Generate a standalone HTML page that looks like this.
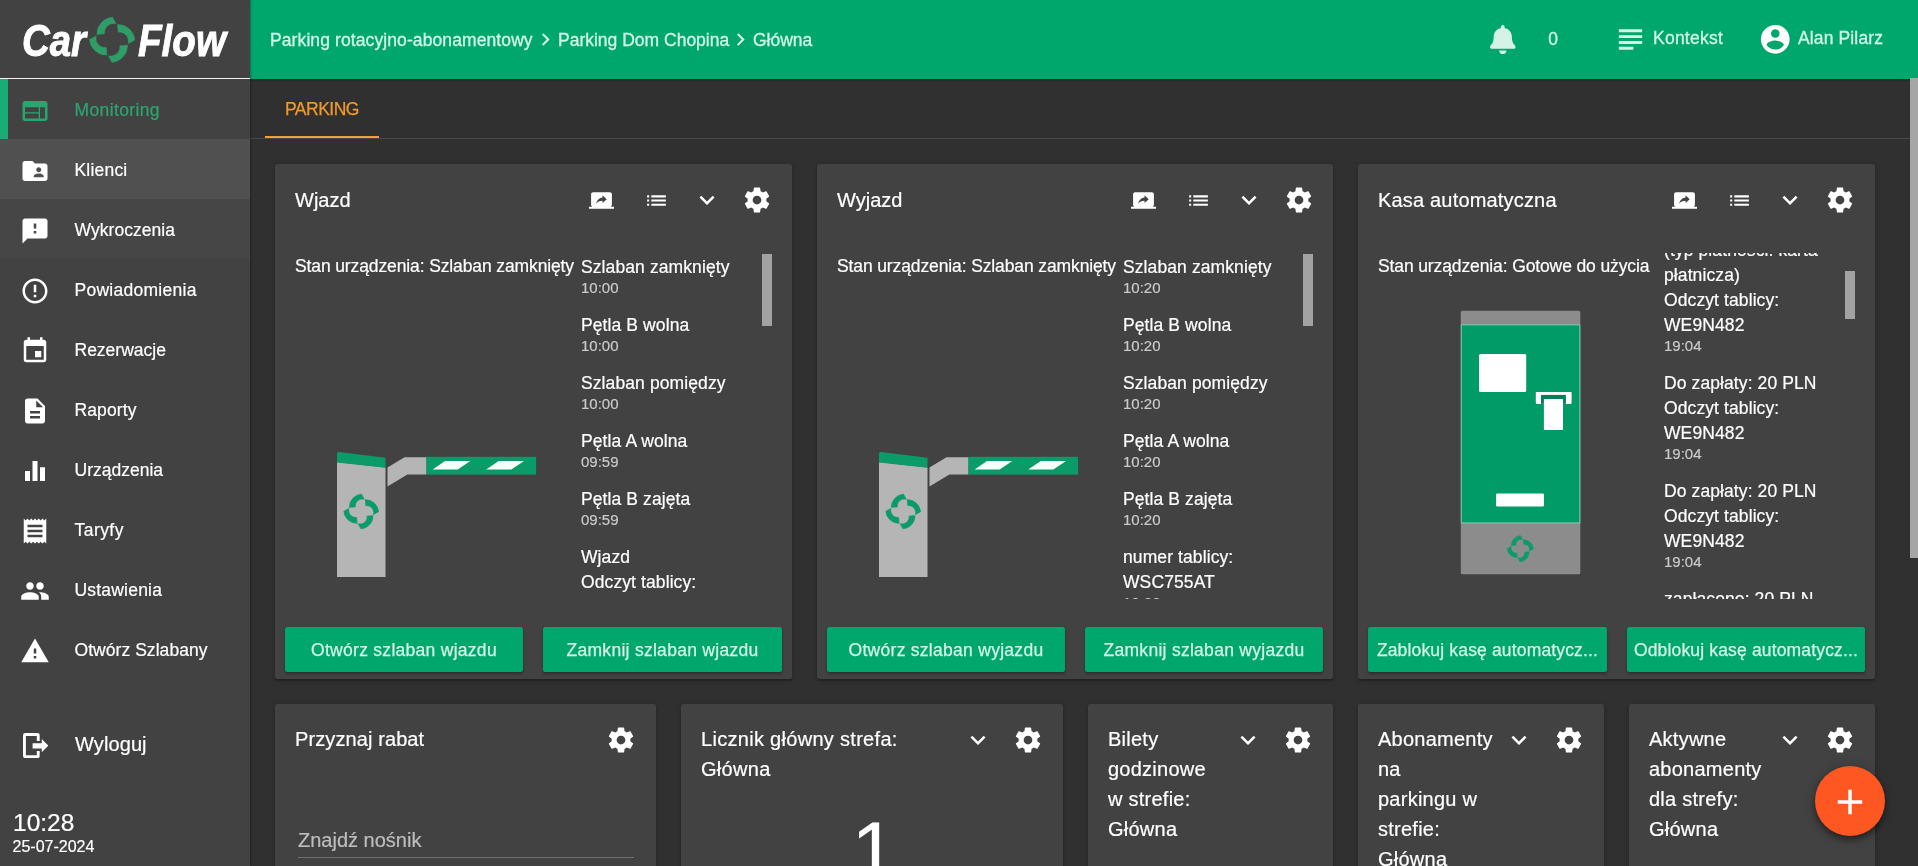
<!DOCTYPE html>
<html lang="pl">
<head>
<meta charset="utf-8">
<title>CarFlow - Monitoring</title>
<style>
*{box-sizing:border-box;margin:0;padding:0}
html,body{width:1918px;height:866px;overflow:hidden;background:#303030}
body{font-family:"Liberation Sans",sans-serif;color:#fff;position:relative;font-size:17.5px;-webkit-text-stroke:.2px}
svg{display:block;position:absolute}
.abs{position:absolute;white-space:nowrap}
#side,#top,#main,.card{will-change:transform}
/* sidebar */
#side{position:absolute;left:0;top:0;width:250px;height:866px;background:#424242;box-shadow:1px 0 2px rgba(0,0,0,.3);z-index:3}
#side .line{position:absolute;left:0;top:78px;width:250px;height:1px;background:#f2f2f2}
.nav{position:absolute;left:0;width:250px;height:60px}
.nav .t{position:absolute;left:74.5px;top:0;line-height:62px;letter-spacing:.1px;font-size:17.5px;white-space:nowrap}
.nav svg{left:20.2px;top:17px;width:30px;height:30px;fill:#fff}
.nav.act{background:#424242}
.nav.act .bar{position:absolute;left:0;top:0;width:8px;height:60px;background:#1aac76}
.nav.act .t{color:#2ea571}
.nav.act svg{fill:#28a670}
.nav.hov{background:#505050}
.nav.hov2{background:#464646}
/* top bar */
#top{position:absolute;left:250px;top:0;width:1668px;height:78.75px;background:#00A76D;box-shadow:0 1px 2px rgba(0,0,0,.35)}
#top .t{position:absolute;white-space:nowrap;color:#d2f7e8;font-size:17.5px;line-height:20px;-webkit-text-stroke:.3px #d2f7e8}
/* main */
#tabline{position:absolute;left:250px;top:138px;width:1660px;height:1px;background:#484848}
#tabul{position:absolute;left:265px;top:136px;width:114px;height:2.3px;background:#eea03a}
.card{position:absolute;background:#424242;border-radius:2.5px;box-shadow:0 2px 2px rgba(0,0,0,.22),0 1px 5px rgba(0,0,0,.18);overflow:hidden}
.card .h{position:absolute;left:20px;top:20.8px;font-size:20px;line-height:30px;white-space:nowrap}
.card .h.r2{top:20px;letter-spacing:.25px}
.ic{fill:#fff}
.btn{position:absolute;height:45px;letter-spacing:.16px;padding-top:.7px;-webkit-text-stroke:.25px #d4f3e6;border-radius:2.5px;background:#00A76D;color:#d4f3e6;font-size:17.5px;line-height:45px;text-align:center;white-space:nowrap;overflow:hidden;box-shadow:0 2px 3px rgba(0,0,0,.3)}
.stan{position:absolute;left:20px;top:90.7px;font-size:17.5px;line-height:22px;letter-spacing:-.12px;white-space:nowrap}
.log{position:absolute;top:89px;height:346px;overflow:hidden}
.log .in{position:absolute;left:0;width:100%}
.log p{font-size:17.5px;line-height:25px;white-space:nowrap;letter-spacing:.1px;position:relative;top:.8px}
.log p.tm{font-size:15px;line-height:21px;color:#cacaca;margin-bottom:12px;position:relative;top:-2.3px;letter-spacing:0}
.sb{position:absolute;width:10px;background:#a2a2a2}
</style>
</head>
<body>
<svg width="0" height="0" style="position:absolute">
  <defs>
    <symbol id="i-gear" viewBox="0 0 24 24"><path d="M19.43 12.98c.04-.32.07-.64.07-.98s-.03-.66-.07-.98l2.11-1.65c.19-.15.24-.42.12-.64l-2-3.46c-.12-.22-.39-.3-.61-.22l-2.49 1c-.52-.4-1.08-.73-1.69-.98l-.38-2.65C14.46 2.18 14.25 2 14 2h-4c-.25 0-.46.18-.49.42l-.38 2.65c-.61.25-1.17.59-1.69.98l-2.49-1c-.23-.09-.49 0-.61.22l-2 3.46c-.13.22-.07.49.12.64l2.11 1.65c-.04.32-.07.65-.07.98s.03.66.07.98l-2.11 1.65c-.19.15-.24.42-.12.64l2 3.46c.12.22.39.3.61.22l2.49-1c.52.4 1.08.73 1.69.98l.38 2.65c.03.24.24.42.49.42h4c.25 0 .46-.18.49-.42l.38-2.65c.61-.25 1.17-.59 1.69-.98l2.49 1c.23.09.49 0 .61-.22l2-3.46c.12-.22.07-.49-.12-.64l-2.11-1.65zM12 15.5c-1.93 0-3.5-1.57-3.5-3.5s1.57-3.5 3.5-3.5 3.5 1.57 3.5 3.5-1.57 3.5-3.5 3.5z"/></symbol>
    <symbol id="i-share" viewBox="0 0 24 24"><path d="M20 18c1.1 0 1.99-.9 1.99-2L22 6c0-1.11-.9-2-2-2H4c-1.11 0-2 .89-2 2v10c0 1.1.89 2 2 2H0v2h24v-2h-4zm-7-3.53v-2.19c-2.78 0-4.61.85-6 2.72.56-2.67 2.11-5.33 6-5.87V7l4 3.73-4 3.74z"/></symbol>
    <symbol id="i-list" viewBox="0 0 24 24"><path d="M3 13h2v-2H3v2zm0 4h2v-2H3v2zm0-8h2V7H3v2zm4 4h14v-2H7v2zm0 4h14v-2H7v2zM7 7v2h14V7H7z"/></symbol>
    <symbol id="i-chev" viewBox="0 0 24 24"><path d="M7.41 8.59L12 13.17l4.59-4.58L18 10l-6 6-6-6 1.41-1.41z"/></symbol>
  </defs>
</svg>

<!-- ============ SIDEBAR ============ -->
<div id="side">
  <svg id="logo" style="left:0;top:0" width="250" height="78" viewBox="0 0 250 78">
    <defs>
      <g id="cf">
        <path d="M-15.3-5.4A17 17 0 0 1 .3-22.5L3.8-16A9.2 9.2 0 0 0-7.7-6Z"/>
        <path d="M-15.3-5.4A17 17 0 0 1 .3-22.5L3.8-16A9.2 9.2 0 0 0-7.7-6Z" transform="rotate(90)"/>
        <path d="M-15.3-5.4A17 17 0 0 1 .3-22.5L3.8-16A9.2 9.2 0 0 0-7.7-6Z" transform="rotate(180)"/>
        <path d="M-15.3-5.4A17 17 0 0 1 .3-22.5L3.8-16A9.2 9.2 0 0 0-7.7-6Z" transform="rotate(270)"/>
      </g>
    </defs>
    <text x="22" y="55.5" font-family="Liberation Sans, sans-serif" font-weight="bold" font-style="italic" font-size="44" fill="#fff" stroke="#fff" stroke-width=".9" textLength="64" lengthAdjust="spacingAndGlyphs">Car</text>
    <use href="#cf" transform="translate(112.2 39.8)" fill="#2e9e66" stroke="#2e9e66" stroke-width=".6"/>
    <text x="138" y="55.5" font-family="Liberation Sans, sans-serif" font-weight="bold" font-style="italic" font-size="44" fill="#fff" stroke="#fff" stroke-width=".9" textLength="88" lengthAdjust="spacingAndGlyphs">Flow</text>
  </svg>
  <div class="line"></div>
  <div id="navs">
    <div class="nav act" style="top:79px"><div class="bar"></div><svg viewBox="0 0 24 24"><path d="M20 4H4c-1.1 0-1.99.9-1.99 2L2 18c0 1.1.9 2 2 2h16c1.1 0 2-.9 2-2V6c0-1.1-.9-2-2-2zm-5 14H4v-4h11v4zm0-5H4V9h11v4zm5 5h-4V9h4v9z"/></svg><span class="t" style="letter-spacing:0.37px">Monitoring</span></div>
    <div class="nav hov" style="top:139px"><svg viewBox="0 0 24 24"><path d="M20 6h-8l-2-2H4c-1.1 0-1.99.9-1.99 2L2 18c0 1.1.9 2 2 2h16c1.1 0 2-.9 2-2V8c0-1.1-.9-2-2-2zm-5 3c1.1 0 2 .9 2 2s-.9 2-2 2-2-.9-2-2 .9-2 2-2zm4 8h-8v-1c0-1.33 2.67-2 4-2s4 .67 4 2v1z"/></svg><span class="t" style="letter-spacing:0.2px">Klienci</span></div>
    <div class="nav hov2" style="top:199px"><svg viewBox="0 0 24 24"><path d="M20 2H4c-1.1 0-1.99.9-1.99 2L2 22l4-4h14c1.1 0 2-.9 2-2V4c0-1.1-.9-2-2-2zm-7 12h-2v-2h2v2zm0-4h-2V6h2v4z"/></svg><span class="t" style="letter-spacing:0.05px">Wykroczenia</span></div>
    <div class="nav " style="top:259px"><svg viewBox="0 0 24 24"><path d="M11 15h2v2h-2zm0-8h2v6h-2zm.99-5C6.47 2 2 6.48 2 12s4.47 10 9.99 10C17.52 22 22 17.52 22 12S17.52 2 11.99 2zM12 20c-4.42 0-8-3.58-8-8s3.58-8 8-8 8 3.58 8 8-3.58 8-8 8z"/></svg><span class="t" style="letter-spacing:0.27px">Powiadomienia</span></div>
    <div class="nav " style="top:319px"><svg viewBox="0 0 24 24"><path d="M17 12h-5v5h5v-5zM16 1v2H8V1H6v2H5c-1.11 0-1.99.9-1.99 2L3 19c0 1.1.89 2 2 2h14c1.1 0 2-.9 2-2V5c0-1.1-.9-2-2-2h-1V1h-2zm3 18H5V8h14v11z"/></svg><span class="t" style="letter-spacing:0px">Rezerwacje</span></div>
    <div class="nav " style="top:379px"><svg viewBox="0 0 24 24"><path d="M14 2H6c-1.1 0-1.99.9-1.99 2L4 20c0 1.1.89 2 1.99 2H18c1.1 0 2-.9 2-2V8l-6-6zm2 16H8v-2h8v2zm0-4H8v-2h8v2zm-3-5V3.5L18.5 9H13z"/></svg><span class="t" style="letter-spacing:0.1px">Raporty</span></div>
    <div class="nav " style="top:439px"><svg viewBox="0 0 24 24"><path d="M10 20h4V4h-4v16zm-6 0h4v-8H4v8zM16 9v11h4V9h-4z"/></svg><span class="t" style="letter-spacing:0px">Urządzenia</span></div>
    <div class="nav " style="top:499px"><svg viewBox="0 0 24 24"><path d="M18 17H6v-2h12v2zm0-4H6v-2h12v2zm0-4H6V7h12v2zM3 22l1.5-1.5L6 22l1.5-1.5L9 22l1.5-1.5L12 22l1.5-1.5L15 22l1.5-1.5L18 22l1.5-1.5L21 22V2l-1.5 1.5L18 2l-1.5 1.5L15 2l-1.5 1.5L12 2l-1.5 1.5L9 2 7.5 3.5 6 2 4.5 3.5 3 2v20z"/></svg><span class="t" style="letter-spacing:0.45px">Taryfy</span></div>
    <div class="nav " style="top:559px"><svg viewBox="0 0 24 24"><path d="M16 11c1.66 0 2.99-1.34 2.99-3S17.66 5 16 5c-1.66 0-3 1.34-3 3s1.34 3 3 3zm-8 0c1.66 0 2.99-1.34 2.99-3S9.66 5 8 5C6.34 5 5 6.34 5 8s1.34 3 3 3zm0 2c-2.33 0-7 1.17-7 3.5V19h14v-2.5c0-2.33-4.67-3.5-7-3.5zm8 0c-.29 0-.62.02-.97.05 1.16.84 1.97 1.97 1.97 3.45V19h6v-2.5c0-2.33-4.67-3.5-7-3.5z"/></svg><span class="t" style="letter-spacing:0.2px">Ustawienia</span></div>
    <div class="nav " style="top:619px"><svg viewBox="0 0 24 24"><path d="M1 21h22L12 2 1 21zm12-3h-2v-2h2v2zm0-4h-2v-4h2v4z"/></svg><span class="t" style="letter-spacing:0.05px">Otwórz Szlabany</span></div>
    <div class="nav" style="top:713px"><svg viewBox="0 0 25.4 25.2" style="left:22.5px;top:20.3px;width:25.4px;height:25.2px"><path d="M2.5 0H14.2a2.5 2.5 0 0 1 2.5 2.5V7.9H13.8V2.9H2.9V22.3H13.8V17.9H16.7V22.7a2.5 2.5 0 0 1-2.5 2.5H2.5a2.5 2.5 0 0 1-2.5-2.5V2.5A2.5 2.5 0 0 1 2.5 0ZM18.75 6L25.4 12.7L18.75 19.2V15.4H9.6V10.2H18.75Z"/></svg><span class="t" style="font-size:20px;left:75px">Wyloguj</span></div>
    <div class="abs" style="left:13px;top:808.7px;font-size:24.5px;line-height:28px">10:28</div>
    <div class="abs" style="left:12.5px;top:838.4px;font-size:16px;line-height:18px">25-07-2024</div>
  </div>
</div>

<!-- ============ TOP BAR ============ -->
<div id="top">
  <span class="t" style="left:20px;top:30px;letter-spacing:.1px">Parking rotacyjno-abonamentowy</span>
  <svg style="left:283px;top:27px;width:25px;height:25px;fill:#d4f3e6" viewBox="0 0 24 24"><path d="M10 6L8.59 7.41 13.17 12l-4.58 4.59L10 18l6-6z"/></svg>
  <span class="t" style="left:308px;top:30px">Parking Dom Chopina</span>
  <svg style="left:478px;top:27px;width:25px;height:25px;fill:#d4f3e6" viewBox="0 0 24 24"><path d="M10 6L8.59 7.41 13.17 12l-4.58 4.59L10 18l6-6z"/></svg>
  <span class="t" style="left:503px;top:30px">Główna</span>
  <svg style="left:1240px;top:24.8px;width:25.6px;height:29.2px;fill:#d4f3e6" viewBox="0 0 448 512"><path d="M224 512c35.32 0 63.97-28.65 63.97-64H160.03c0 35.35 28.65 64 63.97 64zm215.39-149.71c-19.32-20.76-55.47-51.99-55.47-154.29 0-77.7-54.48-139.9-127.94-155.16V32c0-17.67-14.32-32-31.98-32s-31.98 14.33-31.98 32v20.84C118.56 68.1 64.08 130.3 64.08 208c0 102.3-36.15 133.53-55.47 154.29-6 6.45-8.66 14.16-8.61 21.71.11 16.4 12.98 32 32.1 32h383.8c19.12 0 32-15.6 32.1-32 .05-7.55-2.61-15.27-8.61-21.71z"/></svg>
  <span class="t" style="left:1298.2px;top:29px">0</span>
  <svg style="left:1363px;top:22.1px;width:35px;height:35px;fill:#d4f3e6" viewBox="0 0 24 24"><path d="M14 17H4v2h10v-2zm6-8H4v2h16V9zM4 15h16v-2H4v2zM4 5v2h16V5H4z"/></svg>
  <span class="t" style="left:1403px;top:28px;letter-spacing:.24px">Kontekst</span>
  <svg style="left:1508.1px;top:22.2px;width:34.5px;height:34.5px;fill:#fff" viewBox="0 0 24 24"><path d="M12 2C6.48 2 2 6.48 2 12s4.48 10 10 10 10-4.48 10-10S17.52 2 12 2zm0 3c1.66 0 3 1.34 3 3s-1.34 3-3 3-3-1.34-3-3 1.34-3 3-3zm0 14.2c-2.5 0-4.71-1.28-6-3.22.03-1.99 4-3.08 6-3.08 1.99 0 5.97 1.09 6 3.08-1.29 1.94-3.5 3.22-6 3.22z"/></svg>
  <span class="t" style="left:1548px;top:28px;letter-spacing:.13px">Alan Pilarz</span>
</div>

<!-- ============ MAIN ============ -->
<div id="main">
  <div class="abs" style="left:285px;top:99.2px;font-size:17.5px;line-height:20px;color:#f09a2e;letter-spacing:-.5px;-webkit-text-stroke:.25px #f09a2e">PARKING</div>
  <div id="tabline"></div><div id="tabul"></div>

  <!-- Wjazd -->
  <div class="card" style="left:275px;top:164px;width:517px;height:515px">
    <div class="h">Wjazd</div>
    <svg class="ic" style="left:313.8px;top:24px" width="25" height="25"><use href="#i-share"/></svg><svg class="ic" style="left:369.2px;top:23.9px" width="25" height="25"><use href="#i-list"/></svg><svg class="ic" style="left:417px;top:20.6px" width="30" height="30"><use href="#i-chev"/></svg><svg class="ic" style="left:467px;top:21px" width="30" height="30"><use href="#i-gear"/></svg>
    <div class="stan">Stan urządzenia: Szlaban zamknięty</div>
    <svg style="left:55px;top:280px" width="220" height="140" viewBox="330 444 220 140">
      <polygon points="337,462 385.5,467.5 385.5,577 337,577" fill="#b5b5b5"/>
      <path d="M337 453.5Q337 451.6 339 452L385.5 457.7V467.7L337 462.5Z" fill="#0b9b69"/>
      <polygon points="387.5,467.4 404.5,457.2 426.5,457.2 426.5,474.4 407.4,474.4 387.5,486.4" fill="#b5b5b5"/>
      <rect x="426.5" y="456.8" width="109.6" height="17.8" fill="#0b9b69"/>
      <polygon points="432.6,469.4 457.7,469.4 470.3,461.1 445,461.1" fill="#f4fffb"/>
      <polygon points="486.2,469.4 511.3,469.4 524,461.1 498.7,461.1" fill="#f4fffb"/>
      <use href="#cf" transform="translate(361.2 511.5) scale(.77)" fill="#0b9b69" stroke="#0b9b69" stroke-width="1"/>
    </svg>
    <div class="log" style="left:306px;width:180px"><div class="in" style="top:1px"><p>Szlaban zamknięty</p><p class="tm">10:00</p><p>Pętla B wolna</p><p class="tm">10:00</p><p>Szlaban pomiędzy</p><p class="tm">10:00</p><p>Pętla A wolna</p><p class="tm">09:59</p><p>Pętla B zajęta</p><p class="tm">09:59</p><p>Wjazd</p><p>Odczyt tablicy:</p><p>WSC755AT</p><p class="tm">09:59</p></div></div>
    <div class="sb" style="left:487px;top:90px;height:72px"></div>
    <div class="btn" style="left:10px;top:463px;width:238px;letter-spacing:.28px">Otwórz szlaban wjazdu</div>
    <div class="btn" style="left:268px;top:463px;width:239px;letter-spacing:.28px">Zamknij szlaban wjazdu</div>
  </div>

  <!-- Wyjazd -->
  <div class="card" style="left:817px;top:164px;width:516px;height:515px">
    <div class="h">Wyjazd</div>
    <svg class="ic" style="left:313.8px;top:24px" width="25" height="25"><use href="#i-share"/></svg><svg class="ic" style="left:369.2px;top:23.9px" width="25" height="25"><use href="#i-list"/></svg><svg class="ic" style="left:417px;top:20.6px" width="30" height="30"><use href="#i-chev"/></svg><svg class="ic" style="left:467px;top:21px" width="30" height="30"><use href="#i-gear"/></svg>
    <div class="stan">Stan urządzenia: Szlaban zamknięty</div>
    <svg style="left:55px;top:280px" width="220" height="140" viewBox="330 444 220 140">
      <polygon points="337,462 385.5,467.5 385.5,577 337,577" fill="#b5b5b5"/>
      <path d="M337 453.5Q337 451.6 339 452L385.5 457.7V467.7L337 462.5Z" fill="#0b9b69"/>
      <polygon points="387.5,467.4 404.5,457.2 426.5,457.2 426.5,474.4 407.4,474.4 387.5,486.4" fill="#b5b5b5"/>
      <rect x="426.5" y="456.8" width="109.6" height="17.8" fill="#0b9b69"/>
      <polygon points="432.6,469.4 457.7,469.4 470.3,461.1 445,461.1" fill="#f4fffb"/>
      <polygon points="486.2,469.4 511.3,469.4 524,461.1 498.7,461.1" fill="#f4fffb"/>
      <use href="#cf" transform="translate(361.2 511.5) scale(.77)" fill="#0b9b69" stroke="#0b9b69" stroke-width="1"/>
    </svg>
    <div class="log" style="left:306px;width:180px"><div class="in" style="top:1px"><p>Szlaban zamknięty</p><p class="tm">10:20</p><p>Pętla B wolna</p><p class="tm">10:20</p><p>Szlaban pomiędzy</p><p class="tm">10:20</p><p>Pętla A wolna</p><p class="tm">10:20</p><p>Pętla B zajęta</p><p class="tm">10:20</p><p>numer tablicy:</p><p>WSC755AT</p><p class="tm">10:20</p></div></div>
    <div class="sb" style="left:486px;top:90px;height:72px"></div>
    <div class="btn" style="left:10px;top:463px;width:238px;letter-spacing:.28px">Otwórz szlaban wyjazdu</div>
    <div class="btn" style="left:268px;top:463px;width:238px;letter-spacing:.28px">Zamknij szlaban wyjazdu</div>
  </div>

  <!-- Kasa automatyczna -->
  <div class="card" style="left:1358px;top:164px;width:517px;height:515px">
    <div class="h" style="letter-spacing:.18px">Kasa automatyczna</div>
    <svg class="ic" style="left:313.8px;top:24px" width="25" height="25"><use href="#i-share"/></svg><svg class="ic" style="left:369.2px;top:23.9px" width="25" height="25"><use href="#i-list"/></svg><svg class="ic" style="left:417px;top:20.6px" width="30" height="30"><use href="#i-chev"/></svg><svg class="ic" style="left:467px;top:21px" width="30" height="30"><use href="#i-gear"/></svg>
    <div class="stan">Stan urządzenia: Gotowe do użycia</div>
    <svg style="left:100px;top:144px" width="124" height="270" viewBox="1458 308 124 270">
      <rect x="1460.8" y="310.8" width="119.5" height="263.4" rx="1.5" fill="#8c8c8c"/>
      <rect x="1461.2" y="324.9" width="118.7" height="198" fill="#009b66" stroke="#8edabc" stroke-width=".8"/>
      <rect x="1479" y="353.9" width="47.2" height="38.1" rx="1.5" fill="#fff"/>
      <rect x="1535.8" y="392" width="35.8" height="11.9" rx=".8" fill="#fff"/>
      <rect x="1541" y="394.9" width="24.9" height="9" fill="#0b7d54"/>
      <rect x="1543.9" y="398.9" width="19.1" height="31.2" rx=".8" fill="#fff"/>
      <rect x="1496.1" y="493.6" width="47.8" height="12.9" rx="1" fill="#fff"/>
      <use href="#cf" transform="translate(1520.3 548.7) scale(.58)" fill="#0b9b69" stroke="#0b9b69" stroke-width="1.2"/>
    </svg>
    <div class="log" style="left:306px;width:180px"><div class="in" style="top:-41px"><p>zapłacono: 20 PLN</p><p>(typ płatności: karta</p><p>płatnicza)</p><p>Odczyt tablicy:</p><p>WE9N482</p><p class="tm">19:04</p><p>Do zapłaty: 20 PLN</p><p>Odczyt tablicy:</p><p>WE9N482</p><p class="tm">19:04</p><p>Do zapłaty: 20 PLN</p><p>Odczyt tablicy:</p><p>WE9N482</p><p class="tm">19:04</p><p>zapłacono: 20 PLN</p><p>(typ płatności: karta</p><p>płatnicza)</p><p class="tm">19:03</p></div></div>
    <div class="sb" style="left:487px;top:107px;height:48px"></div>
    <div class="btn" style="left:10px;top:463px;width:239px">Zablokuj kasę automatycz...</div>
    <div class="btn" style="left:269px;top:463px;width:238px">Odblokuj kasę automatycz...</div>
  </div>

  <!-- Row 2 -->
  <div class="card" style="left:275px;top:704px;width:381px;height:200px">
    <div class="h r2" style="letter-spacing:.1px">Przyznaj rabat</div>
    <svg class="ic" style="left:331px;top:20.5px" width="30" height="30"><use href="#i-gear"/></svg>
    <div class="abs" style="left:23px;top:122px;font-size:20px;line-height:28px;color:#bdbdbd">Znajdź nośnik</div>
    <div class="abs" style="left:23px;top:152.5px;width:336px;height:1px;background:#6e6e6e"></div>
  </div>
  <div class="card" style="left:681px;top:704px;width:382px;height:200px">
    <div class="h r2" style="letter-spacing:.3px">Licznik główny strefa:<br>Główna</div>
    <svg class="ic" style="left:281.5px;top:20.6px" width="30" height="30"><use href="#i-chev"/></svg><svg class="ic" style="left:332px;top:20.5px" width="30" height="30"><use href="#i-gear"/></svg>
    <div class="abs" style="left:2px;top:98.5px;width:382px;text-align:center;font-size:82px;line-height:96px;-webkit-text-stroke:0">1</div>
  </div>
  <div class="card" style="left:1088px;top:704px;width:245px;height:200px">
    <div class="h r2">Bilety<br>godzinowe<br>w strefie:<br>Główna</div>
    <svg class="ic" style="left:144.8px;top:20.6px" width="30" height="30"><use href="#i-chev"/></svg><svg class="ic" style="left:195px;top:20.5px" width="30" height="30"><use href="#i-gear"/></svg>
  </div>
  <div class="card" style="left:1358px;top:704px;width:246px;height:200px">
    <div class="h r2">Abonamenty<br>na<br>parkingu w<br>strefie:<br>Główna</div>
    <svg class="ic" style="left:146px;top:20.6px" width="30" height="30"><use href="#i-chev"/></svg><svg class="ic" style="left:196px;top:20.5px" width="30" height="30"><use href="#i-gear"/></svg>
  </div>
  <div class="card" style="left:1629px;top:704px;width:246px;height:200px">
    <div class="h r2">Aktywne<br>abonamenty<br>dla strefy:<br>Główna</div>
    <svg class="ic" style="left:145.5px;top:20.6px" width="30" height="30"><use href="#i-chev"/></svg><svg class="ic" style="left:195.7px;top:20.5px" width="30" height="30"><use href="#i-gear"/></svg>
  </div>

  <!-- page scrollbar -->
  <div style="position:absolute;left:1910px;top:78px;width:8px;height:480px;background:#a6a6a6"></div>

  <!-- FAB -->
  <div style="position:absolute;left:1815.2px;top:766px;width:70px;height:70px;border-radius:50%;background:#ff5722;box-shadow:0 4px 6px rgba(0,0,0,.35),0 2px 12px rgba(0,0,0,.25)">
    <svg style="left:14px;top:14.8px;fill:#fff" width="42" height="42" viewBox="0 0 24 24"><path d="M19 13h-6v6h-2v-6H5v-2h6V5h2v6h6v2z"/></svg>
  </div>
</div>

</body>
</html>
